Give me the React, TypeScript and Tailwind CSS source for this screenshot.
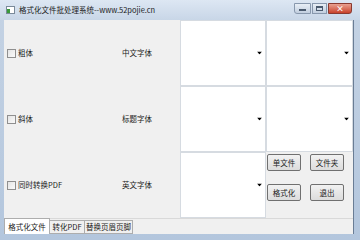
import React from "react";

const font = { fontFamily: '"Noto Sans CJK SC", "Liberation Sans", sans-serif' };

function Arrow() {
  return (
    <svg width="5" height="3" viewBox="0 0 5 3" className="absolute right-[3px] top-1/2 -translate-y-1/2">
      <path d="M0 0H5L2.5 3Z" fill="#000" />
    </svg>
  );
}

function Box({ className = "" }: { className?: string }) {
  return (
    <div className={"relative bg-white border border-[#d6dbe1] " + className}>
      <Arrow />
    </div>
  );
}

function Check({ label }: { label: string }) {
  return (
    <div className="flex items-center gap-[2px]">
      <div className="w-[9px] h-[9px] border border-[#8f8f8f] bg-gradient-to-br from-[#e4e4e4] to-[#fafafa]" />
      <span>{label}</span>
    </div>
  );
}

function Btn({ label }: { label: string }) {
  return (
    <div className="w-[34px] h-[17px] flex items-center justify-center border border-[#707070] rounded-[2px] bg-gradient-to-b from-[#f2f2f2] to-[#dcdcdc]">
      {label}
    </div>
  );
}

export default function App() {
  return (
    <div className="w-[360px] h-[240px] bg-gradient-to-b from-[#c5d3e4] to-[#b3c6dd] flex flex-col text-[7.5px] text-[#1a1a1a]" style={font}>
      <div className="h-[20px] flex items-center pl-[6px] pr-[8px] bg-gradient-to-b from-[#dde7f3] to-[#c8d6e7]">
        <div className="w-[9px] h-[8px] border border-[#7a8a9a] bg-white flex items-end">
          <div className="w-[3px] h-[4px] bg-[#3a9a3a]" />
        </div>
        <span className="ml-[4px]">格式化文件批处理系统--www.52pojie.cn</span>
        <div className="ml-auto flex items-start self-start mt-[3px] gap-[1px]">
          <div className="w-[17px] h-[11px] border border-[#8898ad] rounded-bl-[3px] bg-gradient-to-b from-[#e8eef6] to-[#c2cfdf] flex items-center justify-center">
            <div className="w-[7px] h-[2px] bg-[#4a5a6e] mt-[3px]" />
          </div>
          <div className="w-[15px] h-[11px] border border-[#8898ad] bg-gradient-to-b from-[#e8eef6] to-[#c2cfdf] flex items-center justify-center">
            <div className="w-[7px] h-[5px] border border-[#4a5a6e] border-t-2" />
          </div>
          <div className="w-[24px] h-[11px] border border-[#8a3a30] rounded-br-[3px] bg-gradient-to-b from-[#e8a090] to-[#c8402a] flex items-center justify-center text-white text-[8px] font-bold leading-none">
            ×
          </div>
        </div>
      </div>
      <div className="flex-1 ml-[4px] mr-[6px] mb-[6px] bg-[#f0f0f0] border-r border-[#6a7d95] flex flex-col">
        <div className="flex-1 grid grid-cols-[176px_86px_1fr] grid-rows-3">
          <div className="flex items-center pl-[3px]">
            <div className="w-[115px]"><Check label="粗体" /></div>
            <span>中文字体</span>
          </div>
          <Box />
          <Box />
          <div className="flex items-center pl-[3px]">
            <div className="w-[115px]"><Check label="斜体" /></div>
            <span>标题字体</span>
          </div>
          <Box />
          <Box />
          <div className="flex items-center pl-[3px]">
            <div className="w-[115px]"><Check label="同时转换PDF" /></div>
            <span>英文字体</span>
          </div>
          <Box />
          <div className="flex flex-col gap-[13px] pt-[2px] pl-[1px]">
            <div className="flex gap-[9px]"><Btn label="单文件" /><Btn label="文件夹" /></div>
            <div className="flex gap-[9px]"><Btn label="格式化" /><Btn label="退出" /></div>
          </div>
        </div>
        <div className="h-[16px] flex items-end border-t border-[#d9d9d9]">
          <div className="h-[16px] w-[46px] flex items-center justify-center bg-white border border-[#adadad] border-b-0 -mt-[1px]">格式化文件</div>
          <div className="h-[14px] w-[35px] flex items-center justify-center bg-[#f0f0f0] border border-[#adadad] border-l-0">转化PDF</div>
          <div className="h-[14px] w-[48px] flex items-center justify-center bg-[#f0f0f0] border border-[#adadad] border-l-0">替换页眉页脚</div>
        </div>
      </div>
    </div>
  );
}
